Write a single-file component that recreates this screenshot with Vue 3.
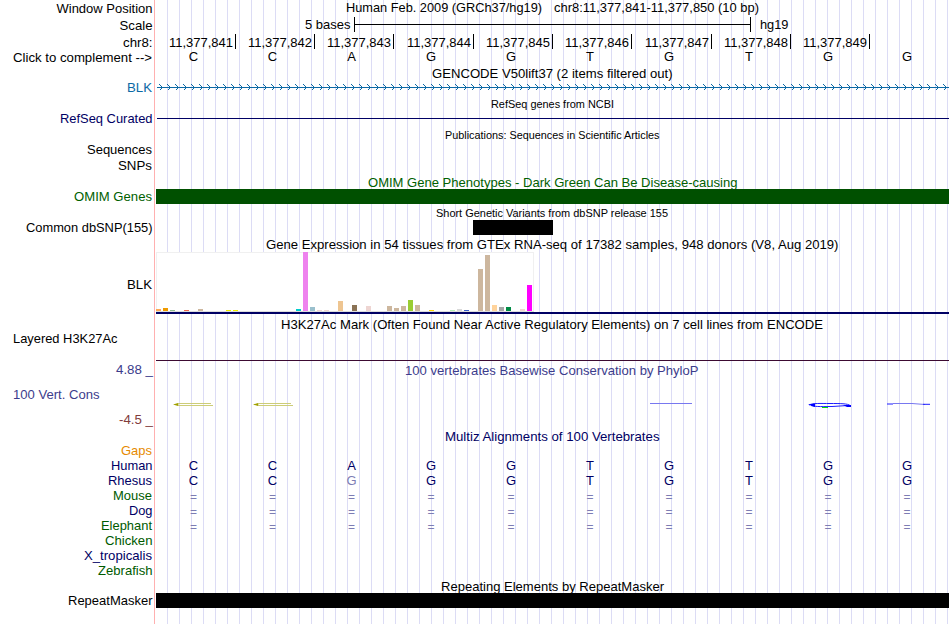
<template>
  <main class="browser">
    <div v-for="row in rows" :key="row.id" class="track-row">
      <svg class="label-col" width="156" :height="row.h">
        <text
          v-if="row.label"
          :x="row.x + 0.5"
          :y="row.base ?? 12"
          :textLength="row.w - 1"
          lengthAdjust="spacingAndGlyphs"
          :class="row.color"
        >{{ row.label }}</text>
      </svg>
      <!-- track area keeps the pixel coordinates of the whole image -->
      <svg class="data-col" width="793" :height="row.h" :viewBox="`156 0 793 ${row.h}`">
        <text
          v-for="t in row.texts"
          :key="t.text"
          :x="t.x + 0.5"
          :y="t.y ?? 12"
          :textLength="t.w - 1"
          lengthAdjust="spacingAndGlyphs"
          :class="[row.color, { small: t.small }]"
        >{{ t.text }}</text>

        <path v-if="row.kind === 'scale'" class="ink" d="M354.5 0V15M354 7.5H751M750.5 0V15" />

        <g v-if="row.kind === 'ticks'">
          <template v-for="(x, i) in ticks" :key="x">
            <text :x="x - 66" y="13" textLength="64">11,377,84{{ i + 1 }}</text>
            <rect :x="x" y="0" width="1" height="15" />
          </template>
        </g>

        <g v-if="row.bases" class="bases">
          <text
            v-for="(b, i) in row.bases"
            :key="i"
            :x="centers[i]"
            :y="row.baseY ?? 12"
            :class="[row.baseColor, { faded: b === '=' || b === 'g', equal: b === '=' }]"
          >{{ b.toUpperCase() }}</text>
        </g>

        <g v-if="row.kind === 'gene'" class="gene">
          <path d="M157 7.5H949" />
          <path v-for="n in 99" :key="n" :d="`M${151.5 + n * 8} 4.5l3 3l-3 3`" />
        </g>

        <rect v-if="row.kind === 'refseq'" class="navy" x="157" y="7" width="792" height="1" />

        <rect
          v-if="row.bar"
          :x="row.bar[0]"
          y="0"
          :width="row.bar[1]"
          height="15"
          :class="row.color"
        />

        <g v-if="row.kind === 'gtex'">
          <rect class="gtex-box" x="156.5" y="1.5" width="377" height="60" />
          <rect class="gtex-base" x="156" y="60" width="378" height="1" />
          <rect
            v-for="[i, h, c] in tissues"
            :key="i"
            :x="156 + i * 7"
            :y="60 - h"
            width="5"
            :height="h"
            :fill="c"
          />
          <rect class="navy" x="156" y="61" width="793" height="2" />
        </g>

        <rect v-if="row.kind === 'h3k'" class="plum" x="156" y="29" width="793" height="1" />

        <g v-if="row.kind === 'phylop'">
          <g v-for="x in [173, 253]" :key="x" :transform="`translate(${x} 18)`" class="olive">
            <path d="M0 1.5L5 0H7L5 1.5L7 3H5Z" />
            <path class="olive-line" d="M5 .5H38M5 2.5H40" />
          </g>
          <path class="blue thin" d="M650 18.5H692" />
          <path class="blue oval" d="M809 20C813 18 820 18.5 830 18.5S848 18.5 850 20.5M811 20.5C816 22 824 21.5 832 21.5L848 20.5" />
          <path class="blue-fill" d="M808 19.5l7-1v3.5zM843 20h8v2h-4z" />
          <rect class="spark" x="822" y="22" width="6" height="1" />
          <path class="blue thin" d="M893 18.5L912 18.5L925 19.5" />
          <path class="blue" d="M887 19H893M923 19.3H930" />
        </g>
      </svg>
    </div>
  </main>
</template>

<script setup>
const ticks = [235, 314, 393, 473, 552, 631, 711, 790, 869];
const centers = [193.5, 272.5, 351.5, 431, 511, 590, 669, 749, 828, 907];

// [tissue index, bar height, colour]
const tissues = [
  [0, 2, "#ffaa56"], [1, 3, "#ee9a00"], [2, 1, "#8fbc8f"], [4, 1, "#ee6a50"],
  [6, 2, "#cdb79e"], [10, 1, "#eeee00"], [11, 1, "#eeee00"], [20, 2, "#00cdcd"],
  [21, 59, "#ee82ee"], [22, 4, "#9ac0cd"], [23, 1, "#eed5d2"], [24, 1, "#eed5d2"],
  [26, 10, "#eec591"], [28, 6, "#8b7355"], [30, 5, "#eed5d2"], [33, 5, "#cdb79e"],
  [34, 3, "#cdb79e"], [35, 5, "#cdb79e"], [36, 11, "#9acd32"], [37, 6, "#cdb79e"],
  [39, 1, "#ffd700"], [42, 1, "#b4eeb4"], [43, 2, "#d9d9d9"], [44, 1, "#3a5fcd"],
  [46, 42, "#cdb79e"], [47, 56, "#cdb79e"], [48, 6, "#ffd39b"], [49, 4, "#a6a6a6"],
  [50, 4, "#008b45"], [52, 2, "#eed5d2"], [53, 26, "#ff00ff"],
];

const title = (id, h, text, x, w, y, color, small) => ({
  id,
  h,
  color,
  texts: [{ text, x, w, y, small }],
});

const rows = [
  {
    id: "position", h: 17, label: "Window Position", x: 56, w: 97, base: 13,
    texts: [
      { text: "Human Feb. 2009 (GRCh37/hg19)", x: 345.5, w: 197 },
      { text: "chr8:11,377,841-11,377,850 (10 bp)", x: 553.5, w: 206 },
    ],
  },
  {
    id: "scale", h: 17, label: "Scale", x: 119, w: 34, base: 13, kind: "scale",
    texts: [
      { text: "5 bases", x: 304.5, w: 46.5 },
      { text: "hg19", x: 759.5, w: 29.5 },
    ],
  },
  { id: "chrom", h: 16, label: "chr8:", x: 122.5, w: 30.5, base: 13, kind: "ticks" },
  {
    id: "complement", h: 16, label: "Click to complement -->", x: 12.5, w: 140,
    bases: "CCAGGTGTGG", baseY: 11,
  },
  title("gencode-title", 14, "GENCODE V50lift37 (2 items filtered out)", 431.5, 241.5),
  { id: "gencode", h: 15, label: "BLK", x: 126.5, w: 26, color: "sky", kind: "gene" },
  title("refseq-title", 16, "RefSeq genes from NCBI", 490.5, 124, 13, "", true),
  { id: "refseq", h: 15, label: "RefSeq Curated", x: 59.5, w: 93.5, color: "navy", kind: "refseq" },
  title("pubs-title", 16, "Publications: Sequences in Scientific Articles", 444.5, 215.5, 13, "", true),
  { id: "pub-seq", h: 16, label: "Sequences", x: 86.5, w: 66 },
  { id: "pub-snp", h: 16, label: "SNPs", x: 117.5, w: 35 },
  title("omim-title", 15, "OMIM Gene Phenotypes - Dark Green Can Be Disease-causing", 367.5, 370.5, 13, "green"),
  { id: "omim", h: 15, label: "OMIM Genes", x: 73.5, w: 79, color: "green", bar: [156, 793] },
  title("dbsnp-title", 16, "Short Genetic Variants from dbSNP release 155", 435.5, 233, 13, "", true),
  { id: "dbsnp", h: 15, label: "Common dbSNP(155)", x: 25.5, w: 127.5, bar: [473, 80] },
  title("gtex-title", 16, "Gene Expression in 54 tissues from GTEx RNA-seq of 17382 samples, 948 donors (V8, Aug 2019)", 265.5, 573.5, 14),
  { id: "gtex", h: 63, label: "BLK", x: 126.5, w: 26, base: 38, kind: "gtex" },
  title("h3k-title", 17, "H3K27Ac Mark (Often Found Near Active Regulatory Elements) on 7 cell lines from ENCODE", 280.5, 543, 15),
  { id: "h3k", h: 31, label: "Layered H3K27Ac", x: 12.5, w: 105.5, kind: "h3k" },
  {
    id: "phylop-max", h: 23, label: "4.88 _", x: 115.5, w: 38, base: 12, color: "indigo",
    texts: [{ text: "100 vertebrates Basewise Conservation by PhyloP", x: 404.5, w: 294.5, y: 13 }],
  },
  { id: "phylop", h: 27, label: "100 Vert. Cons", x: 12.5, w: 87.5, base: 14, color: "indigo", kind: "phylop" },
  { id: "phylop-min", h: 17, label: "-4.5 _", x: 118.5, w: 35, color: "maroon" },
  title("multiz-title", 14, "Multiz Alignments of 100 Vertebrates", 444.5, 215.5, 12, "navy"),
  { id: "gaps", h: 15, label: "Gaps", x: 120.5, w: 32, color: "orange" },
  { id: "human", h: 15, label: "Human", x: 110.5, w: 42.5, color: "navy", bases: "CCAGGTGTGG", baseColor: "navy" },
  { id: "rhesus", h: 15, label: "Rhesus", x: 107.5, w: 45, color: "navy", bases: "CCgGGTGTGG", baseColor: "navy" },
  { id: "mouse", h: 15, label: "Mouse", x: 112.5, w: 40, color: "forest", bases: "==========", baseY: 13 },
  { id: "dog", h: 15, label: "Dog", x: 128.5, w: 24.5, color: "navy", bases: "==========", baseY: 13 },
  { id: "elephant", h: 15, label: "Elephant", x: 100.5, w: 52, color: "forest", bases: "==========", baseY: 13 },
  { id: "chicken", h: 15, label: "Chicken", x: 104.5, w: 48.5, color: "forest" },
  { id: "xtropicalis", h: 15, label: "X_tropicalis", x: 83.5, w: 69, color: "navy" },
  { id: "zebrafish", h: 15, label: "Zebrafish", x: 97.5, w: 55.5, color: "forest" },
  title("rmsk-title", 15, "Repeating Elements by RepeatMasker", 440.5, 224, 13),
  { id: "rmsk", h: 15, label: "RepeatMasker", x: 67.5, w: 85.5, bar: [156, 793] },
  { id: "end", h: 16 },
];
</script>

<style scoped>
.browser {
  width: 949px;
  height: 624px;
  overflow: hidden;
  background:
    linear-gradient(#ffb0b0, #ffb0b0) 154px 0 / 1px 100% no-repeat,
    repeating-linear-gradient(90deg, transparent 0 11px, #dcdcf5 11px 12px) 156px 0 no-repeat;
  font-family: "Liberation Sans", Arial, sans-serif;
  font-size: 13px;
}

.track-row {
  display: flex;
}

/* descenders may reach into the next row */
.label-col,
.data-col {
  display: block;
  flex: none;
  overflow: visible;
}

text {
  white-space: pre;
}

.small {
  font-size: 11px;
}

.ink {
  stroke: #000;
  fill: none;
}

.navy {
  fill: #000064;
}

.sky {
  fill: #0c69a5;
}

.green {
  fill: #005000;
}

text.green {
  fill: #006000;
}

.forest {
  fill: #005a00;
}

.indigo {
  fill: #3c3c8c;
}

.maroon {
  fill: #823c3c;
}

.orange {
  fill: #e68a00;
}

.plum {
  fill: #3c0a32;
}

.gene path {
  fill: none;
  stroke: #0c69a5;
  shape-rendering: crispEdges;
}

.bases text {
  text-anchor: middle;
}

.bases .faded {
  fill: #7d7db4;
}

.bases .equal {
  font-size: 12px;
}

.gtex-box {
  fill: #fff;
  stroke: #f0f0f0;
}

.gtex-base {
  fill: #ddd;
}

.olive {
  fill: #a0a000;
}

.olive-line {
  stroke: #cdcd78;
}

.blue {
  fill: none;
  stroke: #1e1eff;
}

.thin {
  stroke: #7878f0;
}

.blue-fill {
  fill: #0000ff;
}

.spark {
  fill: #00e000;
}
</style>
